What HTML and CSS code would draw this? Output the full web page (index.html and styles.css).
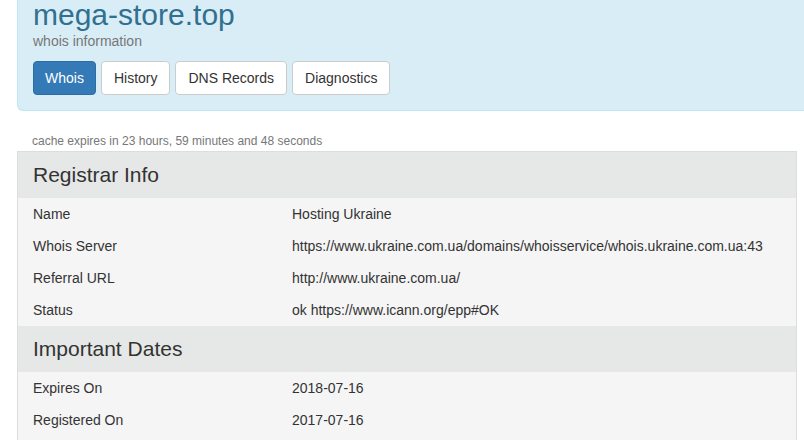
FILE: index.html
```html
<!DOCTYPE html>
<html>
<head>
<meta charset="utf-8">
<title>mega-store.top whois</title>
<link rel="stylesheet" href="styles.css">
</head>
<body>
<div class="page">
  <div class="jumbotron">
    <h1 class="title">mega-store.top</h1>
    <p class="subtitle">whois information</p>
    <div class="tabs">
      <a class="btn btn-primary">Whois</a>
      <a class="btn">History</a>
      <a class="btn">DNS Records</a>
      <a class="btn">Diagnostics</a>
    </div>
  </div>
  <p class="cache">cache expires in 23 hours, 59 minutes and 48 seconds</p>
  <div class="panel">
    <div class="section">Registrar Info</div>
    <div class="row"><div class="key">Name</div><div class="val">Hosting Ukraine</div></div>
    <div class="row"><div class="key">Whois Server</div><div class="val">https://www.ukraine.com.ua/domains/whoisservice/whois.ukraine.com.ua:43</div></div>
    <div class="row"><div class="key">Referral URL</div><div class="val">http://www.ukraine.com.ua/</div></div>
    <div class="row"><div class="key">Status</div><div class="val">ok https://www.icann.org/epp#OK</div></div>
    <div class="section">Important Dates</div>
    <div class="row"><div class="key">Expires On</div><div class="val">2018-07-16</div></div>
    <div class="row"><div class="key">Registered On</div><div class="val">2017-07-16</div></div>
  </div>
</div>
</body>
</html>
```
FILE: styles.css
```css
html, body {
  margin: 0;
  padding: 0;
  overflow: hidden;
  background: #fff;
}
body {
  font-family: "Liberation Sans", Arial, sans-serif;
  font-size: 14px;
  line-height: 20px;
  color: #333;
}
.page {
  padding-left: 17px;
}
.jumbotron {
  width: 820px;
  box-sizing: border-box;
  background: #d9edf7;
  border-left: 1px solid #bce8f1;
  border-bottom: 1px solid #bce8f1;
  border-bottom-left-radius: 6px;
  padding: 0 0 15px 15px;
}
.title {
  margin: 0;
  font-size: 30px;
  line-height: 29px;
  font-weight: normal;
  color: #31708f;
}
.subtitle {
  margin: 2px 0 0;
  font-size: 14px;
  line-height: 20px;
  color: #777;
}
.tabs {
  display: flex;
  gap: 5px;
  margin-top: 10px;
}
.btn {
  display: block;
  padding: 6px 12px;
  font-size: 14px;
  line-height: 20px;
  border: 1px solid #ccc;
  border-radius: 4px;
  background: #fff;
  color: #333;
}
.btn-primary {
  padding: 6px 11px;
  background: #337ab7;
  border-color: #2e6da4;
  color: #fff;
}
.cache {
  margin: 22px 0 1px 15px;
  font-size: 12px;
  line-height: 17px;
  color: #777;
}
.panel {
  width: 780px;
  box-sizing: border-box;
  border: 1px solid #ddd;
  border-bottom: none;
  background: #f5f5f5;
  padding-bottom: 20px;
}
.section {
  background: #e6e8e7;
  padding: 8px 15px;
  font-size: 21px;
  line-height: 30px;
  color: #333;
}
.row {
  display: grid;
  grid-template-columns: 259px 1fr;
  background: #f5f5f5;
}
.key, .val {
  padding: 6px 15px;
  line-height: 20px;
}
```
